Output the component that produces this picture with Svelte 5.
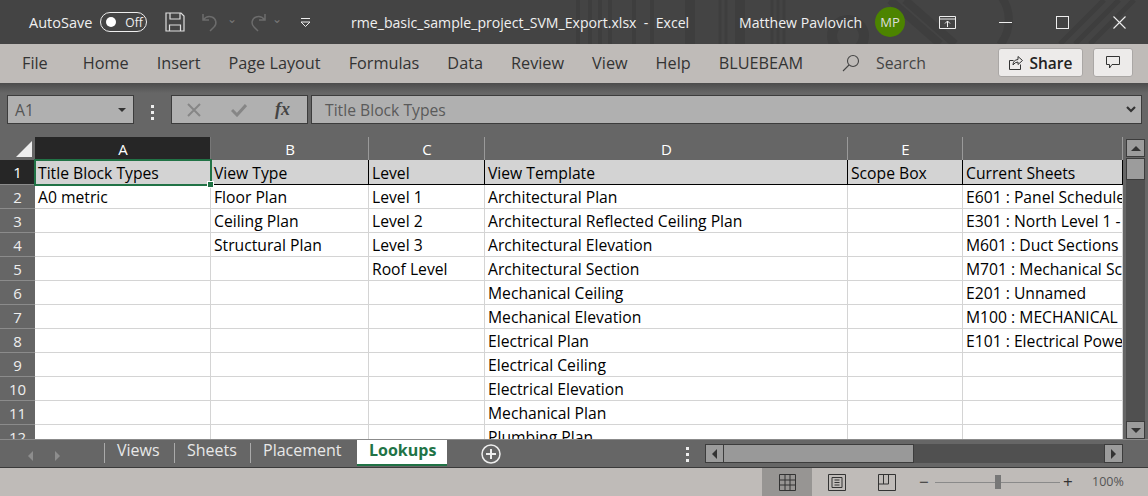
<script>
  const tabs1 = ['File','Home','Insert','Page Layout','Formulas','Data','Review','View','Help','BLUEBEAM'];
  const cols = [['A',176],['B',158],['C',116],['D',363],['E',115],['',160]];
  const rows = [
    ['Title Block Types','View Type','Level','View Template','Scope Box','Current Sheets'],
    ['A0 metric','Floor Plan','Level 1','Architectural Plan','','E601 : Panel Schedules'],
    ['','Ceiling Plan','Level 2','Architectural Reflected Ceiling Plan','','E301 : North Level 1 - Lighting'],
    ['','Structural Plan','Level 3','Architectural Elevation','','M601 : Duct Sections'],
    ['','','Roof Level','Architectural Section','','M701 : Mechanical Schedules'],
    ['','','','Mechanical Ceiling','','E201 : Unnamed'],
    ['','','','Mechanical Elevation','','M100 : MECHANICAL PLAN'],
    ['','','','Electrical Plan','','E101 : Electrical Power Plan'],
    ['','','','Electrical Ceiling','',''],
    ['','','','Electrical Elevation','',''],
    ['','','','Mechanical Plan','',''],
    ['','','','Plumbing Plan','','']
  ];
</script>

<div class="app">
  <header class="title">
    <svg class="deco" width="1148" height="44" viewBox="0 0 1148 44" fill="none" stroke="#3e3e3e">
      <g stroke-width="4"><path d="M578 0v44M590 0v44M600 0v44M610 0v44M634 0v44M652 0v44"/></g>
      <g stroke-width="10"><path d="M690 0v44M740 0v44"/></g>
      <g stroke-width="3"><path d="M720 0v44M726 0v44M772 0v44M778 0v44M784 0v44"/></g>
      <circle cx="848" cy="36" r="16" stroke-width="10"/>
      <path d="M890 0l50 44M905 0l50 44M1000 -5a40 40 0 0 1 0 50" stroke-width="8"/>
      <path d="M1060 44l44-44M1075 44l44-44M1090 44l44-44" stroke-width="5"/>
    </svg>
    <span class="autosave">AutoSave</span>
    <span class="toggle"><i></i><b>Off</b></span>
    <svg class="save" width="20" height="20" viewBox="0 0 20 20" fill="none" stroke="#ddd" stroke-width="1.2"><path d="M1 1h15l3 3v15H1zM5 1v6h10V1M4.500 19v-6h11v6"/></svg>
    <svg class="undo" width="20" height="20" viewBox="0 0 20 20" fill="none" stroke="#6c6c6c" stroke-width="1.500"><path d="M2 2v6h6M2 8q4-5 9-3a6 6 0 0 1 2 10l-4 4"/></svg>
    <span class="car c1">⌄</span>
    <svg class="redo" width="20" height="20" viewBox="0 0 20 20" fill="none" stroke="#6c6c6c" stroke-width="1.500"><path d="M18 2v6h-6M18 8q-4-5-9-3a6 6 0 0 0-2 10l4 4"/></svg>
    <span class="car c2">⌄</span>
    <svg class="qat" width="9" height="9" viewBox="0 0 9 9" fill="#eee"><rect width="9" height="1"/><path d="M0 4h9L4.500 8.500z" fill="none" stroke="#eee"/></svg>
    <span class="file">rme_basic_sample_project_SVM_Export.xlsx &nbsp;-&nbsp; Excel</span>
    <span class="user">Matthew Pavlovich</span>
    <span class="avatar">MP</span>
    <svg class="ctl" width="17" height="13" viewBox="0 0 17 13" fill="none" stroke="#eee"><path d="M.5.500h16v12H.5zM.5 3h16M8.500 11V5M6 7.500l2.500-2.500 2.500 2.500"/></svg>
    <span class="min"></span>
    <span class="max"></span>
    <svg class="close" width="13" height="13" viewBox="0 0 13 13" stroke="#eee" stroke-width="1.100"><path d="M.5.500l12 12M12.500.500l-12 12"/></svg>
  </header>

  <nav class="ribbon">
    <div class="tabs">{#each tabs1 as t}<span>{t}</span>{/each}</div>
    <svg class="mag" width="18" height="18" viewBox="0 0 18 18" fill="none" stroke="#444" stroke-width="1.100"><circle cx="11" cy="7" r="5.500"/><path d="M7 11l-6 6"/></svg>
    <span class="search">Search</span>
    <button class="share">
      <svg width="14" height="15" viewBox="0 0 14 15" fill="none" stroke="#333"><path d="M.5 5.500h4M.5 5.500v9h11v-5M4 10q0-5 5-5.500V1.500l4.500 4-4.500 4V7q-3 0-5 3z"/></svg>
      Share
    </button>
    <button class="comment">
      <svg width="14" height="13" viewBox="0 0 14 13" fill="none" stroke="#333"><path d="M.5.500h13v8H6L3.500 12V8.500h-3z"/></svg>
    </button>
  </nav>

  <div class="formula">
    <div class="namebox"><span>A1</span><i class="down"></i></div>
    <div class="dots"><i></i><i></i><i></i></div>
    <div class="fbtns">
      <svg width="14" height="14" viewBox="0 0 14 14" stroke="#868686" stroke-width="2"><path d="M1 1l12 12M13 1L1 13"/></svg>
      <svg width="16" height="14" viewBox="0 0 16 14" fill="none" stroke="#868686" stroke-width="3"><path d="M1 7l5 5 9-10"/></svg>
      <em>fx</em>
    </div>
    <div class="finput"><span>Title Block Types</span>
      <svg width="10" height="7" viewBox="0 0 10 7" fill="none" stroke="#333" stroke-width="2.200"><path d="M1 1l4 4 4-4"/></svg>
    </div>
  </div>

  <div class="sheetarea">
    <div class="sheet">
      <div class="colhead">
        <div class="corner"><span></span></div>
        {#each cols as [c,w],i}
          <div class="ch" class:act={i===0} style="width:{w}px">{c}</div>
        {/each}
      </div>
      {#each rows as r,ri}
        <div class="row" class:first={ri===0}>
          <div class="rh" class:act={ri===0}>{ri+1}</div>
          {#each r as v,ci}
            <div class="cell" class:sel={ri===0&&ci===0} style="width:{cols[ci][1]}px">{v}</div>
          {/each}
        </div>
      {/each}
    </div>
    <div class="vscroll">
      <div class="sbtn"><i class="up"></i></div>
      <div class="vthumb"></div>
      <div class="vtrack"></div>
      <div class="sbtn last"><i class="dn"></i></div>
    </div>
  </div>

  <div class="tabbar">
    <div class="navs"><i class="l"></i><i class="r"></i></div>
    <div class="stabs">
      <span class="st">Views</span><span class="st">Sheets</span><span class="st">Placement</span><span class="st on">Lookups</span>
    </div>
    <svg class="plus" width="20" height="20" viewBox="0 0 20 20" fill="none" stroke="#eee" stroke-width="1.500"><circle cx="10" cy="10" r="9"/><path d="M10 5v10M5 10h10" stroke-width="2"/></svg>
    <div class="dots d2"><i></i><i></i><i></i></div>
    <div class="hscroll">
      <div class="hbtn"><i class="l2"></i></div>
      <div class="hthumb"></div>
      <div class="htrack"></div>
      <div class="hbtn"><i class="r2"></i></div>
    </div>
  </div>

  <footer class="status">
    <div class="vw on"><svg width="17" height="17" viewBox="0 0 17 17" fill="none" stroke="#333"><path d="M.5.500h16v16H.5zM.5 6h16M.5 11h16M6 .5v16M11 .5v16"/></svg></div>
    <div class="vw"><svg width="18" height="17" viewBox="0 0 18 17" fill="none" stroke="#333"><path d="M.5.500h17v16H.5zM4 3.500h10v10H4zM6.500 6h5M6.500 8.500h5M6.500 11h5"/></svg></div>
    <div class="vw"><svg width="18" height="17" viewBox="0 0 18 17" fill="none" stroke="#333"><path d="M.5.500h17v16H.5zM.5 10h10V.5M5.500.5V10"/></svg></div>
    <span class="zm">−</span>
    <div class="slider"><i></i></div>
    <span class="zm zp">+</span>
    <span class="pct">100%</span>
  </footer>
</div>

<style>
  :global(body){margin:0;background:#666}
  .app{width:1148px;height:496px;overflow:hidden;display:flex;flex-direction:column;font-family:"Open Sans","Noto Sans",sans-serif}

  .title{height:44px;background:#444;display:flex;align-items:center;color:#f0f0f0;font-size:14.500px;position:relative;flex:none}
  .deco{position:absolute;left:0;top:0}
  .title>*:not(.deco){position:relative}
  .autosave{margin-left:29px}
  .toggle{margin-left:8px;width:45px;height:18px;border:1px solid #eee;border-radius:10px;display:flex;align-items:center;box-sizing:content-box}
  .toggle i{width:10px;height:10px;border-radius:50%;background:#fff;margin-left:5px}
  .toggle b{font-weight:400;font-size:12px;margin-left:9px}
  .save{margin-left:18px}
  .undo{margin-left:16px}
  .car{color:#777;font-size:12px;margin-left:6px;line-height:1;margin-top:-6px}
  .redo{margin-left:10px}
  .c2{margin-left:5px}
  .qat{margin-left:19px}
  .file{position:absolute!important;left:351px;white-space:nowrap;font-size:14.100px}
  .user{position:absolute!important;left:739px;white-space:nowrap;font-size:14.100px}
  .avatar{position:absolute!important;left:875px;top:7px;width:30px;height:30px;border-radius:50%;background:#4c8400;color:#ddd;font-size:13px;display:flex;align-items:center;justify-content:center}
  .ctl{position:absolute!important;left:939px;top:16px}
  .min{position:absolute!important;left:999px;top:22px;width:13px;height:1px;background:#eee}
  .max{position:absolute!important;left:1056px;top:16px;width:11px;height:11px;border:1px solid #eee}
  .close{position:absolute!important;left:1113px;top:16px}

  .ribbon{height:39px;background:#bfbbb8;display:flex;align-items:center;color:#333;font-size:16.250px;position:relative;flex:none}
  .tabs{display:flex;gap:28px;margin:-2px 0 0 22px;white-space:nowrap}
  .tabs span:first-child{margin-right:7px}
  .mag{position:absolute;left:842px;top:10px}
  .search{position:absolute;left:876px;top:8px;color:#444;font-size:15.800px}
  .share,.comment{position:absolute;top:4px;height:29px;background:#edebea;border:1px solid #aaa7a5;border-radius:3px;display:flex;align-items:center;justify-content:center;padding:0;font:inherit;box-sizing:border-box}
  .share{left:998px;width:85px;gap:7px;font-weight:600;color:#222;font-size:15.500px}
  .comment{left:1093px;width:40px}

  .formula{height:54px;flex:none;background:linear-gradient(#4c4c4c,#666 10px);display:flex;align-items:flex-start;padding-top:12px;box-sizing:border-box;padding-left:7px}
  .namebox,.fbtns,.finput{height:29px;background:#b0b0b0;border:1px solid #3c3c3c;box-sizing:border-box;display:flex;align-items:center;color:#555;font-size:15.700px}
  .namebox{width:127px;justify-content:space-between;padding:0 7px}
  .down{width:0;height:0;border:4px solid transparent;border-top:4px solid #333;border-bottom:0}
  .dots{display:flex;flex-direction:column;gap:3px;width:4px;margin:10px 16px 0 17px}
  .dots i{width:3px;height:3px;background:#eee;display:block}
  .fbtns{width:137px;padding-left:15px;gap:30px}
  .fbtns em{font:italic 700 18px "Liberation Serif",serif;color:#444;margin-left:-2px}
  .finput{width:831px;margin-left:3px;padding:0 5px 0 13px;justify-content:space-between;color:#5a5a5a}

  .sheetarea{height:302px;flex:none;display:flex;overflow:hidden;position:relative}
  .sheet{width:1123px;overflow:hidden;flex:none;background:#fff}
  .colhead{height:23px;display:flex;background:#666;color:#fff;font-size:15px}
  .corner{width:35px;position:relative}
  .corner span{position:absolute;right:3px;bottom:3px;width:0;height:0;border-left:16px solid transparent;border-bottom:16px solid #eee}
  .ch{box-sizing:border-box;border-right:1px solid #9a9a9a;text-align:center;line-height:25px;padding-left:1px}
  .ch.act{background:#262626;border-right-color:#777}
  .row{display:flex;height:24px;font-size:15.700px;color:#000}
  .row.first{height:25px;background:#d3d3d3}
  .rh{width:35px;flex:none;box-sizing:border-box;background:#666;color:#eee;text-align:center;line-height:25px;border-bottom:1px solid #8b8b8b;font-size:15px}
  .rh.act{background:#262626;color:#fff}
  .cell{box-sizing:border-box;border-right:1px solid #d4d4d4;border-bottom:1px solid #d4d4d4;padding-left:3px;line-height:25px;white-space:nowrap;overflow:hidden;position:relative}
  .first .cell{border-right-color:#000;border-bottom-color:#000;line-height:27px}
  .cell.sel{overflow:visible;outline:2px solid #217346;outline-offset:-1px;border-color:transparent;z-index:1}
  .cell.sel::after{content:"";position:absolute;right:-4px;bottom:-4px;width:5px;height:5px;background:#217346;border:1px solid #fff}
  .vscroll{width:25px;display:flex;flex-direction:column;background:#666;padding-left:3px;box-sizing:border-box}
  .sbtn{width:19px;height:18px;background:#9c9c9c;border:1px solid #3c3c3c;display:flex;align-items:center;justify-content:center;box-sizing:border-box;margin-top:2px;flex:none}
  .sbtn.last{margin:0}
  .vthumb{width:19px;height:22px;margin-top:1px;background:#9c9c9c;border:1px solid #3c3c3c;box-sizing:border-box;flex:none}
  .vtrack{flex:1;width:19px;background:#505050}
  .up{width:0;height:0;border:5px solid transparent;border-bottom:5px solid #333;border-top:0}
  .dn{width:0;height:0;border:5px solid transparent;border-top:5px solid #333;border-bottom:0}

  .tabbar{height:29px;flex:none;background:#666;display:flex;position:relative;border-bottom:1px solid #3a3a3a;border-top:1px solid #8b8b8b;box-sizing:border-box}
  .navs{width:104px;display:flex;gap:22px;padding:11px 0 0 28px;box-sizing:border-box}
  .navs i{width:0;height:0;border:5px solid transparent}
  .l{border-right:5px solid #8d8d8d!important;border-left:0!important}
  .r{border-left:5px solid #8d8d8d!important;border-right:0!important}
  .stabs{display:flex;height:100%;color:#e8e8e8;font-size:16px}
  .st{padding-left:12px;box-sizing:border-box;position:relative;border-left:1px solid #aaa;height:20px;margin-top:3px;line-height:15px}
  .st:nth-child(1){width:70px}
  .st:nth-child(2){width:76px}
  .st:nth-child(3){width:107px}
  .st.on{width:90px;background:#fff;color:#217346;font-weight:700;border-bottom:2px solid #217346;border-left:0;height:26px;margin:0;line-height:21px}
  .plus{position:absolute;left:481px;top:4px}
  .d2{position:absolute;margin:0;left:686px;top:7px}
  .hscroll{position:absolute;left:705px;top:4px;width:418px;height:19px;display:flex;background:#505050}
  .hbtn{width:19px;height:19px;background:#9c9c9c;border:1px solid #3c3c3c;box-sizing:border-box;display:flex;align-items:center;justify-content:center;flex:none}
  .hthumb{width:190px;background:#999;border:1px solid #3c3c3c;border-left:0;box-sizing:border-box}
  .htrack{flex:1}
  .l2{width:0;height:0;border:5px solid transparent;border-right:5px solid #333;border-left:0}
  .r2{width:0;height:0;border:5px solid transparent;border-left:5px solid #333;border-right:0}

  .status{flex:1;background:#bfbbb8;display:flex;align-items:stretch;position:relative;padding-left:762px}
  .vw{width:50px;display:flex;align-items:center;justify-content:center}
  .vw.on{background:#979593}
  .zm{position:absolute;left:919px;top:1px;font-size:17px;color:#333;line-height:26px}
  .zp{left:1063px}
  .slider{position:absolute;left:935px;top:14px;width:125px;height:1px;background:#8a8a8a}
  .slider i{position:absolute;left:60px;top:-7px;width:6px;height:14px;background:#777}
  .pct{position:absolute;left:1092px;top:5px;font-size:12.500px;color:#555}
</style>
